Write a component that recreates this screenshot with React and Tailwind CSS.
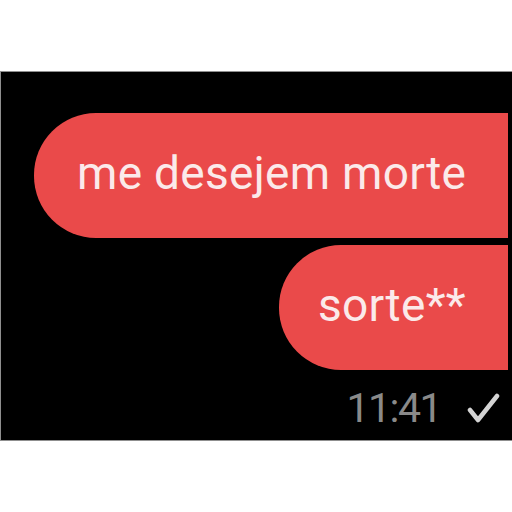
export default function App() {
  return (
    <div className="w-[512px] h-[512px] bg-white pt-[71px]" style={{ fontFamily: 'Roboto, "Noto Sans", sans-serif' }}>
      <div className="h-[370px] bg-black border-t border-l border-b border-[#8f8f8f] flex flex-col items-end pt-[41px] pr-[4px]">
        <div className="w-[474px] h-[125px] bg-[#ea4a4a] rounded-l-[62px] flex items-center pl-[43px]">
          <span className="text-[46px] leading-none text-[#fbeaea] tracking-[0.3px] -mt-[6px]">me desejem morte</span>
        </div>
        <div className="mt-[7px] w-[229px] h-[125px] bg-[#ea4a4a] rounded-l-[62px] flex items-center pl-[39px]">
          <span className="text-[46px] leading-none text-[#fbeaea] tracking-[0.3px] -mt-[6px]">sorte**</span>
        </div>
        <div className="mt-[18px] flex items-center gap-[26px] pr-[7px]">
          <span className="text-[41px] leading-none text-[#8a8a8a] tracking-[-1.5px]">11:41</span>
          <svg width="34" height="32" viewBox="0 0 34 32" fill="none">
            <path d="M3 17 L11 27 L30 3" stroke="#d4d4d4" strokeWidth="4.5" strokeLinecap="round" strokeLinejoin="round" />
          </svg>
        </div>
      </div>
    </div>
  );
}
